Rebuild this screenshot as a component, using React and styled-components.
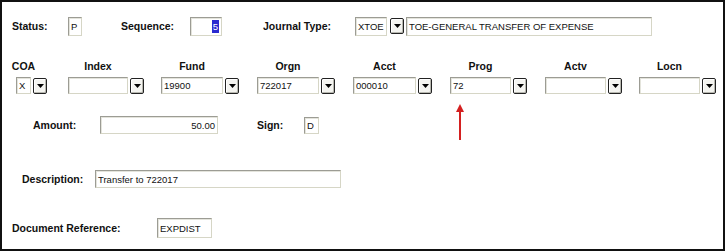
import React from 'react'
import styled, { createGlobalStyle } from 'styled-components'

const GlobalStyle = createGlobalStyle`
  body {
    margin: 0;
    background: #fff;
    font-family: "Liberation Sans", Arial, sans-serif;
  }
`

const Frame = styled.div`
  position: relative;
  box-sizing: border-box;
  width: 725px;
  height: 251px;
  border: 2px solid #111;
  padding: 14px 0 0 0;
  display: flex;
  flex-direction: column;
`

const Row = styled.div`
  display: flex;
  align-items: center;
  margin-top: ${p => p.$mt || 0}px;
  height: ${p => p.$h || 20}px;
`

const Label = styled.div`
  flex: none;
  box-sizing: border-box;
  width: ${p => p.$w}px;
  margin-left: ${p => p.$ml || 0}px;
  font-size: 10.5px;
  font-weight: bold;
  color: #111;
  white-space: nowrap;
`

const Field = styled.div`
  flex: none;
  box-sizing: border-box;
  width: ${p => p.$w}px;
  height: ${p => p.$h || 18}px;
  margin-left: ${p => p.$ml || 0}px;
  padding: 0 2px;
  display: flex;
  align-items: center;
  justify-content: ${p => (p.$right ? 'flex-end' : 'flex-start')};
  border: 1px solid;
  border-color: #9c9c94 #d6d6c6 #d6d6c6 #9c9c94;
  box-shadow: inset 1px 1px 0 #e4e4dc;
  background: #fff;
  font-size: 9.5px;
  color: #111;
  white-space: nowrap;
  overflow: hidden;
`

const Selected = styled.span`
  background: #2a2ad0;
  color: #fff;
  padding: 0 1px;
  line-height: 13px;
`

const DropButton = styled.div`
  flex: none;
  box-sizing: border-box;
  width: 14px;
  height: 16px;
  margin-left: ${p => p.$ml || 2}px;
  border: 1px solid #222;
  border-radius: 2px;
  background: #f4f4f0;
  box-shadow: inset 1px 1px 0 #fff, inset -1px -1px 0 #b8b8b0;
  display: flex;
  align-items: center;
  justify-content: center;
`

const Triangle = () => (
  <svg width="7" height="4" viewBox="0 0 7 4">
    <polygon points="0,0 7,0 3.5,4" fill="#000" />
  </svg>
)

const Dropdown = ({ ml }) => (
  <DropButton $ml={ml}>
    <Triangle />
  </DropButton>
)

const Segments = styled.div`
  display: flex;
  align-items: flex-end;
  margin-top: 24px;
  padding-left: 14px;
`

const Segment = styled.div`
  flex: none;
  margin-left: ${p => p.$ml}px;
  display: grid;
  grid-template-columns: ${p => p.$w}px auto;
  grid-template-rows: 12px 17px;
  row-gap: 5px;
  align-items: center;
`

const SegmentLabel = styled.div`
  display: flex;
  justify-content: center;
  font-size: 10.5px;
  font-weight: bold;
  color: #111;
  white-space: nowrap;
`

const Arrow = styled.svg`
  position: absolute;
  left: 452px;
  top: 101px;
`

const segments = [
  { name: 'COA', w: 15, ml: 0, value: 'X' },
  { name: 'Index', w: 60, ml: 21, value: '' },
  { name: 'Fund', w: 62, ml: 17, value: '19900' },
  { name: 'Orgn', w: 62, ml: 18, value: '722017' },
  { name: 'Acct', w: 63, ml: 18, value: '000010' },
  { name: 'Prog', w: 61, ml: 18, value: '72' },
  { name: 'Actv', w: 61, ml: 18, value: '' },
  { name: 'Locn', w: 61, ml: 17, value: '' },
]

export default function App() {
  return (
    <>
      <GlobalStyle />
      <Frame>
        <Row $h={20}>
          <Label $w={56} $ml={10}>Status:</Label>
          <Field $w={14} $h={19}>P</Field>
          <Label $w={69} $ml={39}>Sequence:</Label>
          <Field $w={32} $h={19} $right>
            <Selected>5</Selected>
          </Field>
          <Label $w={92} $ml={41}>Journal Type:</Label>
          <Field $w={32} $h={19}>XTOE</Field>
          <Dropdown ml={3} />
          <Field $w={246} $h={19} $ml={2}>TOE-GENERAL TRANSFER OF EXPENSE</Field>
        </Row>

        <Segments>
          {segments.map(s => (
            <Segment key={s.name} $w={s.w} $ml={s.ml}>
              <SegmentLabel>{s.name}</SegmentLabel>
              <span />
              <Field $w={s.w} $h={17}>{s.value}</Field>
              <Dropdown ml={2} />
            </Segment>
          ))}
        </Segments>

        <Row $mt={22} $h={18}>
          <Label $w={67} $ml={31}>Amount:</Label>
          <Field $w={118} $h={18} $right>50.00</Field>
          <Label $w={47} $ml={39}>Sign:</Label>
          <Field $w={15} $h={17}>D</Field>
        </Row>

        <Row $mt={36} $h={18}>
          <Label $w={73} $ml={20}>Description:</Label>
          <Field $w={246} $h={18}>Transfer to 722017</Field>
        </Row>

        <Row $mt={30} $h={20}>
          <Label $w={145} $ml={10}>Document Reference:</Label>
          <Field $w={55} $h={20}>EXPDIST</Field>
        </Row>

        <Arrow width="12" height="38" viewBox="0 0 12 38">
          <polygon points="6,1 2,9 10,9" fill="#d42020" />
          <rect x="5" y="8" width="2" height="29" fill="#d42020" />
        </Arrow>
      </Frame>
    </>
  )
}
